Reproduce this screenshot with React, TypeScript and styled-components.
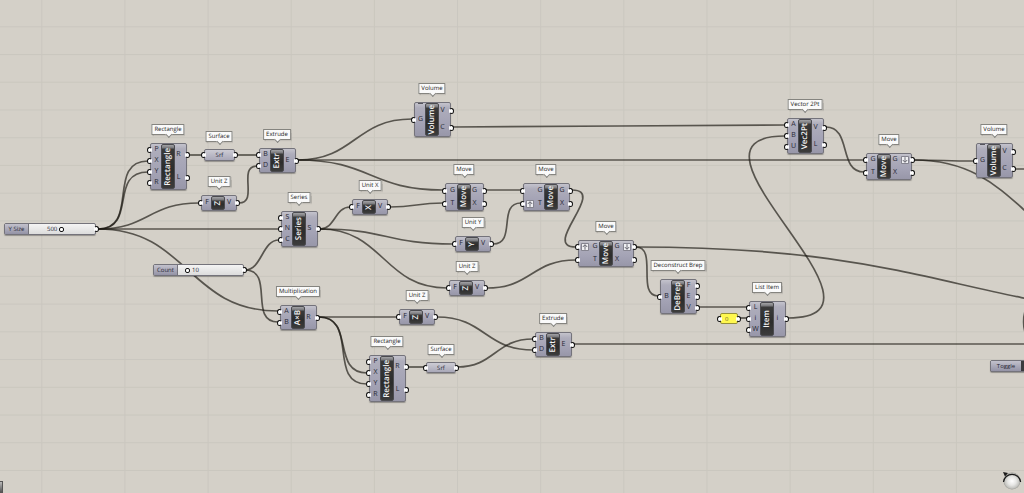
import React, { useState } from "react";
import styled, { createGlobalStyle, css } from "styled-components";

const GlobalStyle = createGlobalStyle`
  * { box-sizing: border-box; }
  body { margin: 0; background: #d4d0c8; }
`;

const Canvas = styled.main`
  position: relative;
  width: 100%;
  height: 100vh;
  overflow: hidden;
  background: #d4d0c8;
  color: #262632;
  font-family: "Open Sans", "Noto Sans", sans-serif;
  font-size: 6px;
  line-height: 8px;
  text-rendering: geometricPrecision;
`;

const Drawing = styled.svg`
  position: absolute;
  inset: 0;
  width: 100%;
  height: 100%;
`;

const casing = css`
  border: 1px solid #74737b;
  border-radius: 2px;
  box-shadow: 0 1px 1px rgba(0, 0, 0, 0.3);
`;

interface Placed {
  $x: number;
  $y: number;
  $w: number;
  $h: number;
}

const placed = css<Placed>`
  position: absolute;
  left: ${(p) => p.$x}px;
  top: ${(p) => p.$y}px;
  width: ${(p) => p.$w}px;
  height: ${(p) => p.$h}px;
`;

const NodeBody = styled.section<Placed & { $notched: boolean }>`
  ${placed}
  ${casing}
  display: flex;
  background: linear-gradient(#c4c3cc 0, #aeadbb 5px, #a4a3b5 60%, #9897a9 100%);

  ${(p) =>
    p.$notched &&
    css`
      &::before {
        content: "";
        position: absolute;
        left: 3px;
        top: 0;
        width: 5px;
        height: 1px;
        background: #55545c;
      }
    `}
`;

const PortColumn = styled.div<{ $side: Side; $wide: boolean }>`
  display: flex;
  flex-direction: column;
  flex: ${(p) => (p.$wide ? "0 0 20px" : p.$side === "left" ? "1 1 9px" : "1 1 11px")};
`;

const PortRow = styled.div<{ $side: Side }>`
  position: relative;
  flex: 1;
  display: flex;
  align-items: center;
  gap: 2px;
  flex-direction: ${(p) => (p.$side === "left" ? "row-reverse" : "row")};
`;

const PortName = styled.span`
  flex: none;
  width: 8px;
  font-size: 7px;
  text-align: center;
`;

const Grip = styled.i<{ $side: Side }>`
  position: absolute;
  top: 50%;
  ${(p) => p.$side}: -4px;
  width: 5px;
  height: 6px;
  margin-top: -3px;
  border: 1px solid #111;
  border-radius: 50%;
  background: #fff;
  ${(p) => (p.$side === "left" ? "border-right-color: transparent" : "border-left-color: transparent")};
`;

const Core = styled.div`
  flex: 0 0 14px;
  display: flex;
  align-items: center;
  justify-content: center;
  overflow: hidden;
  border: 1px solid #4b4b4f;
  border-radius: 2px;
  background: linear-gradient(#a3a3a6 0, #77777a 3px, #3a3a3a 4px, #2c2c2c 60%, #3c3c3c 100%);
  color: #f4f4f4;
  font-size: 8px;
  font-weight: 600;
  line-height: 12px;
`;

const CoreText = styled.span`
  writing-mode: vertical-rl;
  text-orientation: sideways;
  rotate: 180deg;
  white-space: nowrap;
`;

const Callout = styled.h2<{ $x: number; $y: number }>`
  position: absolute;
  left: ${(p) => p.$x}px;
  top: ${(p) => p.$y}px;
  translate: -50% 0;
  margin: 0;
  padding: 0 2px;
  border: 1px solid #85847f;
  background: #fafafa;
  color: #1c1c1c;
  font-size: 6px;
  font-weight: 400;
  line-height: 9px;
  white-space: nowrap;
  box-shadow: 1px 1px 1px rgba(0, 0, 0, 0.15);

  &::after {
    content: "";
    position: absolute;
    left: 50%;
    bottom: -3px;
    width: 4px;
    height: 4px;
    margin-left: -2px;
    border: solid #85847f;
    border-width: 0 1px 1px 0;
    background: #fafafa;
    rotate: 45deg;
  }
`;

const Capsule = styled.section<Placed>`
  ${placed}
  ${casing}
  display: flex;
  align-items: center;
  justify-content: center;
  background: linear-gradient(#cdccd4, #a9a8b8);
`;

const SliderBody = styled.div<Placed>`
  ${placed}
  ${casing}
  display: flex;
  background: linear-gradient(#f4f4f4, #dcdcdc);
`;

const SliderName = styled.label`
  flex: 0 0 24px;
  border-right: 1px solid #74737b;
  background: linear-gradient(#c2c1cc, #9493a6);
  text-align: center;
  line-height: 10px;
`;

const Track = styled.div`
  position: relative;
  flex: 1;
  display: flex;
`;

const Range = styled.input`
  appearance: none;
  width: 100%;
  height: 100%;
  margin: 0;
  background: transparent;

  &::-webkit-slider-thumb {
    appearance: none;
    box-sizing: border-box;
    width: 5px;
    height: 5px;
    border: 1px solid #111;
    border-radius: 2px;
    background: #fff;
  }
`;

const Reading = styled.output<{ $left: number }>`
  position: absolute;
  left: ${(p) => p.$left}px;
  top: 0;
  line-height: 10px;
  pointer-events: none;
`;

const PanelBody = styled.div<Placed>`
  ${placed}
  display: flex;
  border: 1px solid #96903a;
  border-radius: 2px;
  background: #fff84f;
`;

const PanelInput = styled.input`
  width: 100%;
  padding: 0 4px;
  border: 0;
  background: transparent;
  color: #6b6628;
  font: inherit;
`;

const ToggleButton = styled.button<Placed>`
  ${placed}
  ${casing}
  display: flex;
  padding: 0;
  background: #3a3a3e;
  color: inherit;
  font: inherit;
  line-height: 10px;
`;

const ToggleName = styled.span`
  flex: 0 0 30px;
  background: linear-gradient(#c2c1cc, #9493a6);
`;

const Marker = styled.svg`
  flex: none;
  width: 8px;
  height: 8px;
`;

const Compass = styled.svg`
  position: absolute;
  right: 0;
  bottom: 0;
  width: 24px;
  height: 24px;
`;

const CornerWidget = styled.div`
  position: absolute;
  left: 0;
  bottom: 0;
  width: 3px;
  height: 12px;
  border: 1px solid #555;
  border-left: 0;
  background: linear-gradient(#bbb, #555);
`;

type Side = "left" | "right";

interface NodeSpec {
  title: string;
  name: string;
  x: number;
  y: number;
  w: number;
  h: number;
  ins: string[];
  outs: string[];
}

/* "^" before a port name marks a graft arrow, "_" marks a flatten arrow. */
const nodes: NodeSpec[] = [
  { title: "Rectangle", name: "Rectangle", x: 150, y: 143, w: 37, h: 47, ins: ["P", "X", "Y", "R"], outs: ["R", "L"] },
  { title: "Extrude", name: "Extr", x: 259, y: 148, w: 37, h: 25, ins: ["B", "D"], outs: ["E"] },
  { title: "Unit Z", name: "Z", x: 201, y: 195, w: 36, h: 16, ins: ["F"], outs: ["V"] },
  { title: "Series", name: "Series", x: 281, y: 211, w: 37, h: 36, ins: ["S", "N", "C"], outs: ["S"] },
  { title: "Multiplication", name: "A×B", x: 280, y: 305, w: 37, h: 25, ins: ["A", "B"], outs: ["R"] },
  { title: "Unit X", name: "X", x: 352, y: 199, w: 36, h: 16, ins: ["F"], outs: ["V"] },
  { title: "Volume", name: "Volume", x: 414, y: 102, w: 37, h: 35, ins: ["G"], outs: ["V", "C"] },
  { title: "Move", name: "Move", x: 445, y: 183, w: 39, h: 28, ins: ["G", "T"], outs: ["G", "X"] },
  { title: "Move", name: "Move", x: 523, y: 183, w: 47, h: 28, ins: ["G", "^T"], outs: ["G", "X"] },
  { title: "Unit Y", name: "Y", x: 455, y: 236, w: 36, h: 16, ins: ["F"], outs: ["V"] },
  { title: "Unit Z", name: "Z", x: 449, y: 280, w: 36, h: 16, ins: ["F"], outs: ["V"] },
  { title: "Unit Z", name: "Z", x: 399, y: 309, w: 36, h: 16, ins: ["F"], outs: ["V"] },
  { title: "Rectangle", name: "Rectangle", x: 369, y: 355, w: 37, h: 47, ins: ["P", "X", "Y", "R"], outs: ["R", "L"] },
  { title: "Extrude", name: "Extr", x: 535, y: 332, w: 37, h: 25, ins: ["B", "D"], outs: ["E"] },
  { title: "Move", name: "Move", x: 578, y: 240, w: 56, h: 27, ins: ["^G", "T"], outs: ["_G", "X"] },
  { title: "Deconstruct Brep", name: "DeBrep", x: 660, y: 279, w: 37, h: 35, ins: ["B"], outs: ["F", "E", "V"] },
  { title: "List Item", name: "Item", x: 749, y: 301, w: 37, h: 36, ins: ["L", "i", "W"], outs: ["i"] },
  { title: "Vector 2Pt", name: "Vec2Pt", x: 787, y: 118, w: 37, h: 36, ins: ["A", "B", "U"], outs: ["V", "L"] },
  { title: "Move", name: "Move", x: 866, y: 153, w: 46, h: 27, ins: ["G", "T"], outs: ["_G", "X"] },
  { title: "Volume", name: "Volume", x: 976, y: 143, w: 37, h: 35, ins: ["G"], outs: ["V", "C"] },
];

const capsules = [
  { x: 204, y: 149, w: 31, h: 12 },
  { x: 426, y: 362, w: 30, h: 11 },
];

/* x1, y1, x2, y2, horizontal reach of the control handles */
type Wire = [number, number, number, number, number?];

const wires: Wire[] = [
  [98, 229, 148, 161, 42],
  [98, 229, 148, 172, 40],
  [98, 229, 199, 203],
  [98, 229, 279, 229],
  [98, 229, 278, 311],
  [245, 270, 279, 240],
  [245, 270, 278, 322, 30],
  [189, 155, 202, 155],
  [236, 155, 257, 155],
  [239, 203, 257, 166, 20],
  [298, 160, 412, 119],
  [298, 160, 864, 160],
  [298, 160, 443, 190],
  [320, 229, 350, 207],
  [320, 229, 453, 244],
  [320, 229, 447, 288],
  [390, 207, 443, 203],
  [486, 190, 521, 190],
  [493, 244, 521, 203, 24],
  [572, 190, 576, 247, 36],
  [487, 288, 576, 260],
  [319, 317, 397, 317],
  [319, 317, 367, 373, 36],
  [319, 317, 367, 384, 40],
  [408, 367, 425, 367],
  [457, 367, 533, 339],
  [437, 317, 533, 350],
  [574, 344, 1600, 344],
  [636, 247, 658, 296, 22],
  [636, 247, 1283, 321],
  [699, 307, 747, 307],
  [740, 318, 747, 318],
  [788, 318, 785, 136, 125],
  [453, 127, 785, 125],
  [826, 127, 864, 172, 26],
  [914, 160, 974, 161],
  [914, 160, 1130, 256],
  [1015, 169, 1100, 169],
];

const wirePath = ([x1, y1, x2, y2, reach]: Wire) => {
  const c = reach ?? (x2 - x1) / 2;
  return `M${x1} ${y1}C${x1 + c} ${y1} ${x2 - c} ${y2} ${x2} ${y2}`;
};

function Arrow({ up }: { up: boolean }) {
  return (
    <Marker viewBox="0 0 8 8" aria-hidden="true">
      <rect x="0" y="0" width="8" height="8" rx="1" fill="#85848f" />
      <rect x="1" y="1" width="6" height="6" fill="#f0f0f3" />
      <path
        d={up ? "M4 6.800V2M1.800 4L4 1.600L6.200 4" : "M4 1.200V6M1.800 4L4 6.400L6.200 4"}
        fill="none"
        stroke="#4a4954"
        strokeWidth=".8"
      />
    </Marker>
  );
}

function Ports({ side, names }: { side: Side; names: string[] }) {
  const marked = names.some((n) => n.length > 1);
  return (
    <PortColumn $side={side} $wide={marked}>
      {names.map((n) => (
        <PortRow key={n} $side={side}>
          <PortName>{n.slice(-1)}</PortName>
          {n.length > 1 && <Arrow up={n[0] === "^"} />}
          <Grip $side={side} />
        </PortRow>
      ))}
    </PortColumn>
  );
}

function Component({ node }: { node: NodeSpec }) {
  return (
    <>
      <Callout $x={node.x + Math.floor(node.w / 2)} $y={node.y - 19}>
        {node.title}
      </Callout>
      <NodeBody $x={node.x} $y={node.y} $w={node.w} $h={node.h} $notched={node.name === "Volume"}>
        <Ports side="left" names={node.ins} />
        <Core>
          <CoreText>{node.name}</CoreText>
        </Core>
        <Ports side="right" names={node.outs} />
      </NodeBody>
    </>
  );
}

interface SliderProps {
  id: string;
  label: string;
  x: number;
  y: number;
  w: number;
  max: number;
  start: number;
  readingLeft: number;
}

function NumberSlider({ id, label, x, y, w, max, start, readingLeft }: SliderProps) {
  const [value, setValue] = useState(start);
  return (
    <SliderBody $x={x} $y={y} $w={w} $h={12}>
      <SliderName htmlFor={id}>{label}</SliderName>
      <Track>
        <Range id={id} type="range" min={0} max={max} value={value} onChange={(e) => setValue(+e.target.value)} />
        <Reading htmlFor={id} $left={readingLeft}>
          {value}
        </Reading>
        <Grip $side="right" />
      </Track>
    </SliderBody>
  );
}

const columns = Array.from({ length: 40 }, (_, i) => 41.8 + i * 83.15);
const rows = Array.from({ length: 60 }, (_, i) => 26.8 + i * 27.73);

export default function App() {
  const [on, setOn] = useState(false);
  return (
    <>
      <GlobalStyle />
      <Canvas>
        <Drawing aria-hidden="true">
          <g stroke="#cac7bf" strokeWidth="1">
            {columns.map((x) => (
              <line key={x} x1={x} x2={x} y1="0" y2="100%" />
            ))}
            {rows.map((y) => (
              <line key={y} x1="0" x2="100%" y1={y} y2={y} />
            ))}
          </g>
          <g fill="none" stroke="#1d1a14" strokeOpacity=".68" strokeWidth="1.7">
            {wires.map((w) => (
              <path key={w.join()} d={wirePath(w)} />
            ))}
            <path d="M1026 309C1023 316 1023 328 1026 334" strokeWidth="2" />
          </g>
        </Drawing>

        {nodes.map((n) => (
          <Component key={`${n.x}-${n.y}`} node={n} />
        ))}

        {capsules.map((c) => (
          <React.Fragment key={c.x}>
            <Callout $x={c.x + 15} $y={c.y - 18}>
              Surface
            </Callout>
            <Capsule $x={c.x} $y={c.y} $w={c.w} $h={c.h}>
              <Grip $side="left" />
              Srf
              <Grip $side="right" />
            </Capsule>
          </React.Fragment>
        ))}

        <NumberSlider id="y-size" label="Y Size" x={4} y={223} w={92} max={1020} start={500} readingLeft={18} />
        <NumberSlider id="count" label="Count" x={153} y={264} w={91} max={84} start={10} readingLeft={14} />

        <PanelBody $x={720} $y={313} $w={18} $h={11}>
          <Grip $side="left" />
          <PanelInput aria-label="Item index" defaultValue="0" />
          <Grip $side="right" />
        </PanelBody>

        <ToggleButton $x={990} $y={360} $w={60} $h={12} aria-pressed={on} onClick={() => setOn(!on)}>
          <ToggleName>Toggle</ToggleName>
        </ToggleButton>

        <CornerWidget />
        <Compass viewBox="0 0 24 24" aria-hidden="true">
          <defs>
            <radialGradient id="ball" cx=".5" cy=".5" r=".5">
              <stop offset="0" stopColor="#fff" />
              <stop offset=".5" stopColor="#e6e6e4" />
              <stop offset=".85" stopColor="#c4c4c0" />
              <stop offset="1" stopColor="#9a9a96" />
            </radialGradient>
          </defs>
          <circle cx="12" cy="12" r="8.500" fill="url(#ball)" />
          <path d="M3.500 13A8.600 8.600 0 0 1 20.600 13" fill="none" stroke="#1a1a1a" strokeWidth="1.200" />
          <path d="M3 3L8 4L5 7.500Z" fill="#1a1a1a" />
        </Compass>
      </Canvas>
    </>
  );
}
